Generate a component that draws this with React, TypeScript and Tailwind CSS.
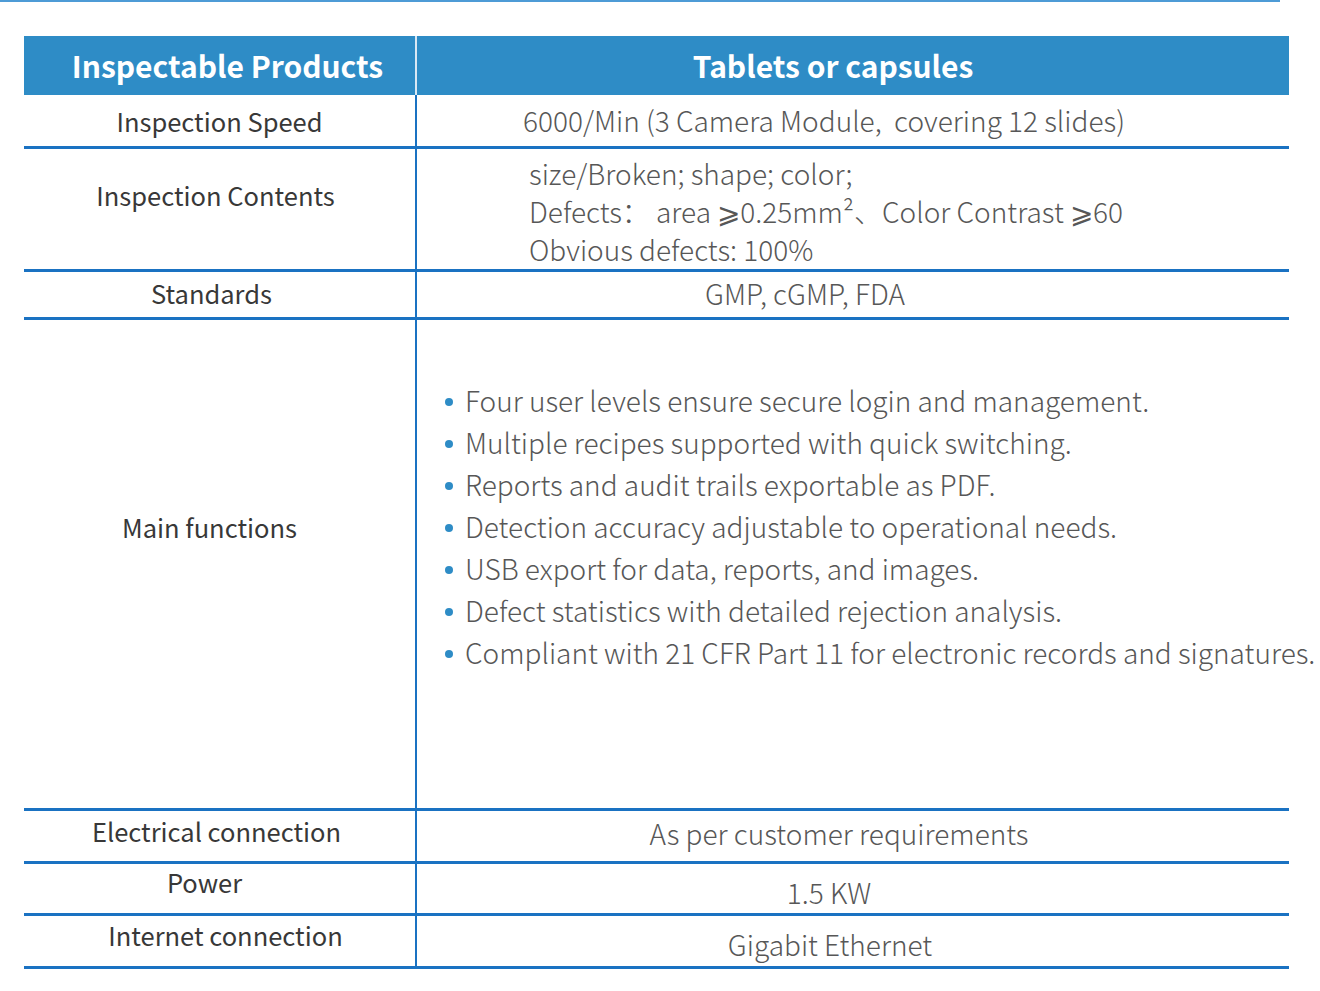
import React from "react"

const font = "font-['Noto_Sans_CJK_SC','Noto_Sans',sans-serif]"

const functions = [
  "Four user levels ensure secure login and management.",
  "Multiple recipes supported with quick switching.",
  "Reports and audit trails exportable as PDF.",
  "Detection accuracy adjustable to operational needs.",
  "USB export for data, reports, and images.",
  "Defect statistics with detailed rejection analysis.",
  "Compliant with 21 CFR Part 11 for electronic records and signatures.",
]

type RowProps = {
  label: string
  h: string
  labelPad: string
  valuePad: string
  value: React.ReactNode
  center?: boolean
}

const Row = ({ label, h, labelPad, valuePad, value, center = true }: RowProps) => (
  <div className={`flex ${h} border-b-[3px] border-[#1a72c2]`}>
    <div className={`w-[393px] shrink-0 border-r-[2px] border-[#1a72c2] text-center text-[25.5px] leading-[34px] text-[#383838] ${labelPad}`}>
      {label}
    </div>
    <div className={`flex-1 text-[28px] font-light leading-[36px] text-[#575757] whitespace-pre ${center ? "text-center" : ""} ${valuePad}`}>
      {value}
    </div>
  </div>
)

const App = () => {
  return (
    <div className={`w-[1320px] h-[991px] bg-white overflow-hidden ${font}`}>
      <div className="w-[1280px] h-[2px] bg-[#4d9bd6]" />

      <div className="ml-[24px] mt-[34px] w-[1265px]">
        <div className="flex h-[59px] bg-[#2e8cc6] text-white text-[30px] font-bold">
          <div className="w-[393px] shrink-0 border-r-[2px] border-[#d9e8f4] flex items-center justify-center pl-[16px]">
            Inspectable Products
          </div>
          <div className="flex-1 flex items-center justify-center pr-[40px]">
            Tablets or capsules
          </div>
        </div>

        <Row
          label="Inspection Speed"
          h="h-[54px]"
          labelPad="pt-[9px]"
          valuePad="pt-[7px] pr-[58px]"
          value="6000/Min (3 Camera Module,  covering 12 slides)"
        />

        <Row
          label="Inspection Contents"
          h="h-[123px]"
          labelPad="pt-[29px] pr-[8px]"
          valuePad="pt-[5px] pl-[112px]"
          center={false}
          value={
            <div className="flex flex-col leading-[38px]">
              <span>size/Broken; shape; color;</span>
              <span>Defects： area ⩾0.25mm²、Color Contrast ⩾60</span>
              <span>Obvious defects: 100%</span>
            </div>
          }
        />

        <Row
          label="Standards"
          h="h-[48px]"
          labelPad="pt-[4px] pr-[16px]"
          valuePad="pt-[3px] pr-[96px]"
          value="GMP, cGMP, FDA"
        />

        <Row
          label="Main functions"
          h="h-[491px]"
          labelPad="pt-[190px] pr-[20px]"
          valuePad="pt-[62px] pl-[28px]"
          center={false}
          value={
            <ul className="flex flex-col gap-[6px] whitespace-nowrap">
              {functions.map((f) => (
                <li key={f} className="flex items-center">
                  <span className="w-[8px] h-[8px] shrink-0 rounded-full bg-[#2e8cc6] mr-[12px] mt-[4px]" />
                  {f}
                </li>
              ))}
            </ul>
          }
        />

        <Row
          label="Electrical connection"
          h="h-[53px]"
          labelPad="pt-[3px] pr-[6px]"
          valuePad="pt-[4px] pr-[28px]"
          value="As per customer requirements"
        />

        <Row
          label="Power"
          h="h-[52px]"
          labelPad="pt-[1px] pr-[30px]"
          valuePad="pt-[10px] pr-[48px]"
          value="1.5 KW"
        />

        <Row
          label="Internet connection"
          h="h-[53px]"
          labelPad="pt-[2px] pl-[12px]"
          valuePad="pt-[10px] pr-[46px]"
          value="Gigabit Ethernet"
        />
      </div>
    </div>
  )
}

export default App
